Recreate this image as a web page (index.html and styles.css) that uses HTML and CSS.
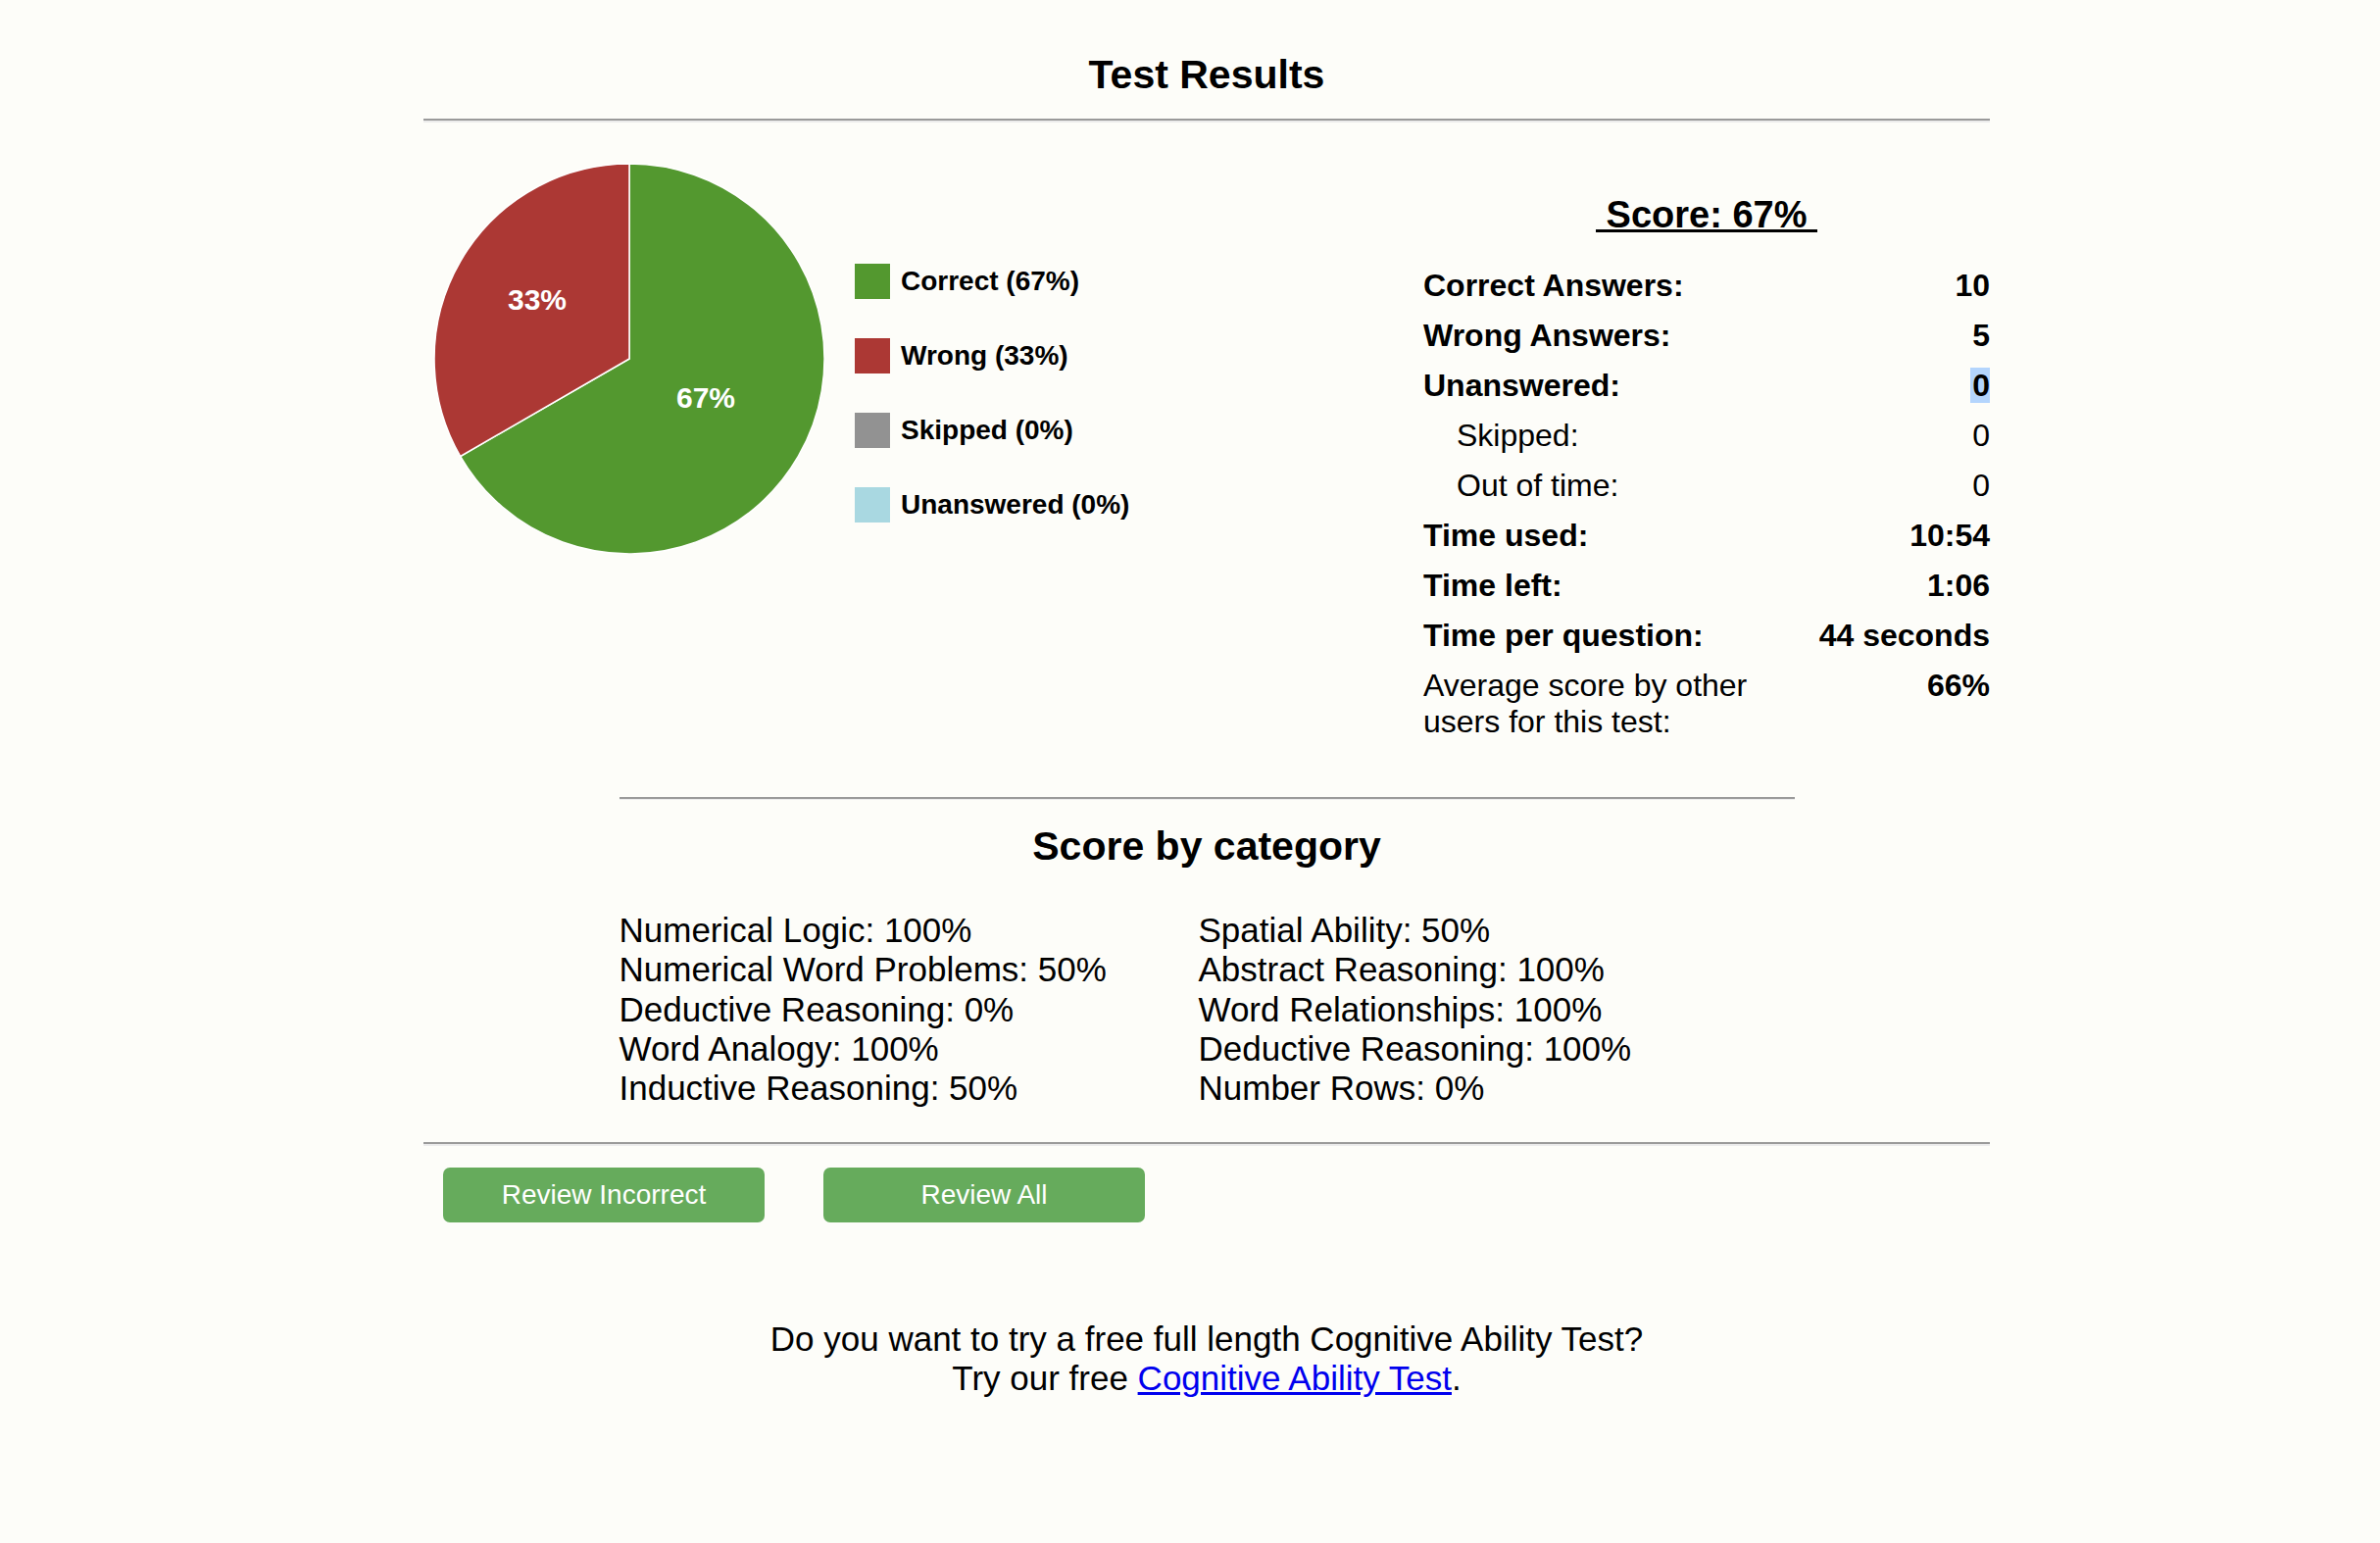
FILE: index.html
```html
<!DOCTYPE html>
<html lang="en">
<head>
<meta charset="utf-8">
<title>Test Results</title>
<link rel="stylesheet" href="styles.css">
</head>
<body>
<div class="page">
  <h1 class="title">Test Results</h1>
  <hr class="rule">

  <div class="summary">
    <div class="chart">
      <svg class="pie" width="400" height="400" viewBox="0 0 400 400">
        <path class="slice-correct" d="M200,201 L200,2 A199,199 0 1,1 27.7,300.5 Z"/>
        <path class="slice-wrong" d="M200,201 L27.7,300.5 A199,199 0 0,1 200,2 Z"/>
        <text class="pie-label" x="106" y="151" text-anchor="middle">33%</text>
        <text class="pie-label" x="278" y="251" text-anchor="middle">67%</text>
      </svg>
      <ul class="legend">
        <li class="legend-item"><span class="swatch swatch-correct"></span><span class="legend-text">Correct (67%)</span></li>
        <li class="legend-item"><span class="swatch swatch-wrong"></span><span class="legend-text">Wrong (33%)</span></li>
        <li class="legend-item"><span class="swatch swatch-skipped"></span><span class="legend-text">Skipped (0%)</span></li>
        <li class="legend-item"><span class="swatch swatch-unanswered"></span><span class="legend-text">Unanswered (0%)</span></li>
      </ul>
    </div>

    <div class="stats">
      <h2 class="score"><span class="score-text">&nbsp;Score: 67%&nbsp;</span></h2>
      <table class="stats-table">
        <tr class="strong"><td class="label">Correct Answers:</td><td class="value">10</td></tr>
        <tr class="strong"><td class="label">Wrong Answers:</td><td class="value">5</td></tr>
        <tr class="strong"><td class="label">Unanswered:</td><td class="value"><span class="selected">0</span></td></tr>
        <tr><td class="label sub">Skipped:</td><td class="value">0</td></tr>
        <tr><td class="label sub">Out of time:</td><td class="value">0</td></tr>
        <tr class="strong"><td class="label">Time used:</td><td class="value">10:54</td></tr>
        <tr class="strong"><td class="label">Time left:</td><td class="value">1:06</td></tr>
        <tr class="strong"><td class="label">Time per question:</td><td class="value">44 seconds</td></tr>
        <tr><td class="label">Average score by other users for this test:</td><td class="value bold">66%</td></tr>
      </table>
    </div>
  </div>

  <hr class="rule rule-short">
  <h2 class="cat-title">Score by category</h2>
  <div class="categories">
    <ul class="cat-list">
      <li>Numerical Logic: 100%</li>
      <li>Numerical Word Problems: 50%</li>
      <li>Deductive Reasoning: 0%</li>
      <li>Word Analogy: 100%</li>
      <li>Inductive Reasoning: 50%</li>
    </ul>
    <ul class="cat-list">
      <li>Spatial Ability: 50%</li>
      <li>Abstract Reasoning: 100%</li>
      <li>Word Relationships: 100%</li>
      <li>Deductive Reasoning: 100%</li>
      <li>Number Rows: 0%</li>
    </ul>
  </div>

  <hr class="rule rule-bottom">
  <div class="actions">
    <button class="btn" type="button">Review Incorrect</button>
    <button class="btn" type="button">Review All</button>
  </div>

  <p class="promo">Do you want to try a free full length Cognitive Ability Test?<br>Try our free <a class="promo-link" href="#">Cognitive Ability Test</a>.</p>
</div>
</body>
</html>
```

FILE: styles.css
```css
html, body {
  margin: 0;
  padding: 0;
  background: #fdfdf9;
}

body {
  font-family: "Liberation Sans", Arial, Helvetica, sans-serif;
  color: #000;
}

.page {
  width: 1598px;
  margin-left: 432px;
  padding-bottom: 80px;
}

.title {
  margin: 0;
  padding-top: 53px;
  font-size: 41px;
  line-height: 47px;
  font-weight: bold;
  text-align: center;
}

.rule {
  height: 0;
  margin: 21px 0 0;
  border: 0;
  border-top: 2px solid #9a9a9a;
  border-bottom: 2px solid #ececec;
}

.summary {
  display: flex;
  align-items: flex-start;
}

.chart {
  display: flex;
  align-items: flex-start;
  margin-left: 10px;
}

.pie {
  display: block;
  margin-top: 40px;
}

.slice-correct {
  fill: #53982f;
  stroke: #ffffff;
  stroke-width: 1.5;
}

.slice-wrong {
  fill: #ac3834;
  stroke: #ffffff;
  stroke-width: 1.5;
}

.pie-label {
  fill: #ffffff;
  font-family: "Liberation Sans", Arial, sans-serif;
  font-weight: bold;
  font-size: 30px;
}

.legend {
  list-style: none;
  margin: 144px 0 0 30px;
  padding: 0;
}

.legend-item {
  display: flex;
  align-items: center;
  height: 36px;
  margin-bottom: 40px;
}

.swatch {
  display: block;
  width: 36px;
  height: 36px;
}

.swatch-correct { background: #53982f; }
.swatch-wrong { background: #ac3834; }
.swatch-skipped { background: #929292; }
.swatch-unanswered { background: #a9d8e1; }

.legend-text {
  margin-left: 11px;
  font-size: 28px;
  font-weight: bold;
  line-height: 32px;
}

.stats {
  width: 578px;
  margin-left: auto;
  margin-top: 72px;
}

.score {
  margin: 0;
  font-size: 38px;
  line-height: 44px;
  font-weight: bold;
  text-align: center;
}

.score-text {
  text-decoration: underline;
}

.stats-table {
  width: 100%;
  margin-top: 25px;
  border-collapse: collapse;
  border-spacing: 0;
  font-size: 32px;
  line-height: 37px;
}

.stats-table td {
  padding: 7px 0;
  vertical-align: top;
}

.label {
  width: 350px;
  text-align: left;
}

.label.sub {
  padding-left: 34px;
}

.value {
  text-align: right;
}

.strong td,
.bold {
  font-weight: bold;
}

.selected {
  background: #b4d5fd;
  padding-left: 2px;
}

.rule-short {
  width: 1199px;
  margin: 51px auto 0;
  border-top-width: 2px;
  border-bottom-width: 1px;
}

.cat-title {
  margin: 24px 0 0;
  font-size: 41px;
  line-height: 47px;
  font-weight: bold;
  text-align: center;
}

.categories {
  width: 1199px;
  margin: 42px auto 0;
  display: grid;
  grid-template-columns: 591px 1fr;
}

.cat-list {
  list-style: none;
  margin: 0;
  padding: 0;
  font-size: 35px;
  line-height: 40.3px;
}

.rule-bottom {
  margin-top: 35px;
}

.actions {
  display: flex;
  gap: 60px;
  padding-left: 20px;
  margin-top: 22px;
}

.btn {
  width: 328px;
  height: 56px;
  border: 0;
  border-radius: 7px;
  background: #66ab5c;
  color: #ffffff;
  font-family: "Liberation Sans", Arial, sans-serif;
  font-size: 28px;
  padding: 0;
}

.promo {
  margin: 99px 0 0;
  text-align: center;
  font-size: 35px;
  line-height: 40px;
}

.promo-link {
  color: #0000ee;
  text-decoration: underline;
}
```
